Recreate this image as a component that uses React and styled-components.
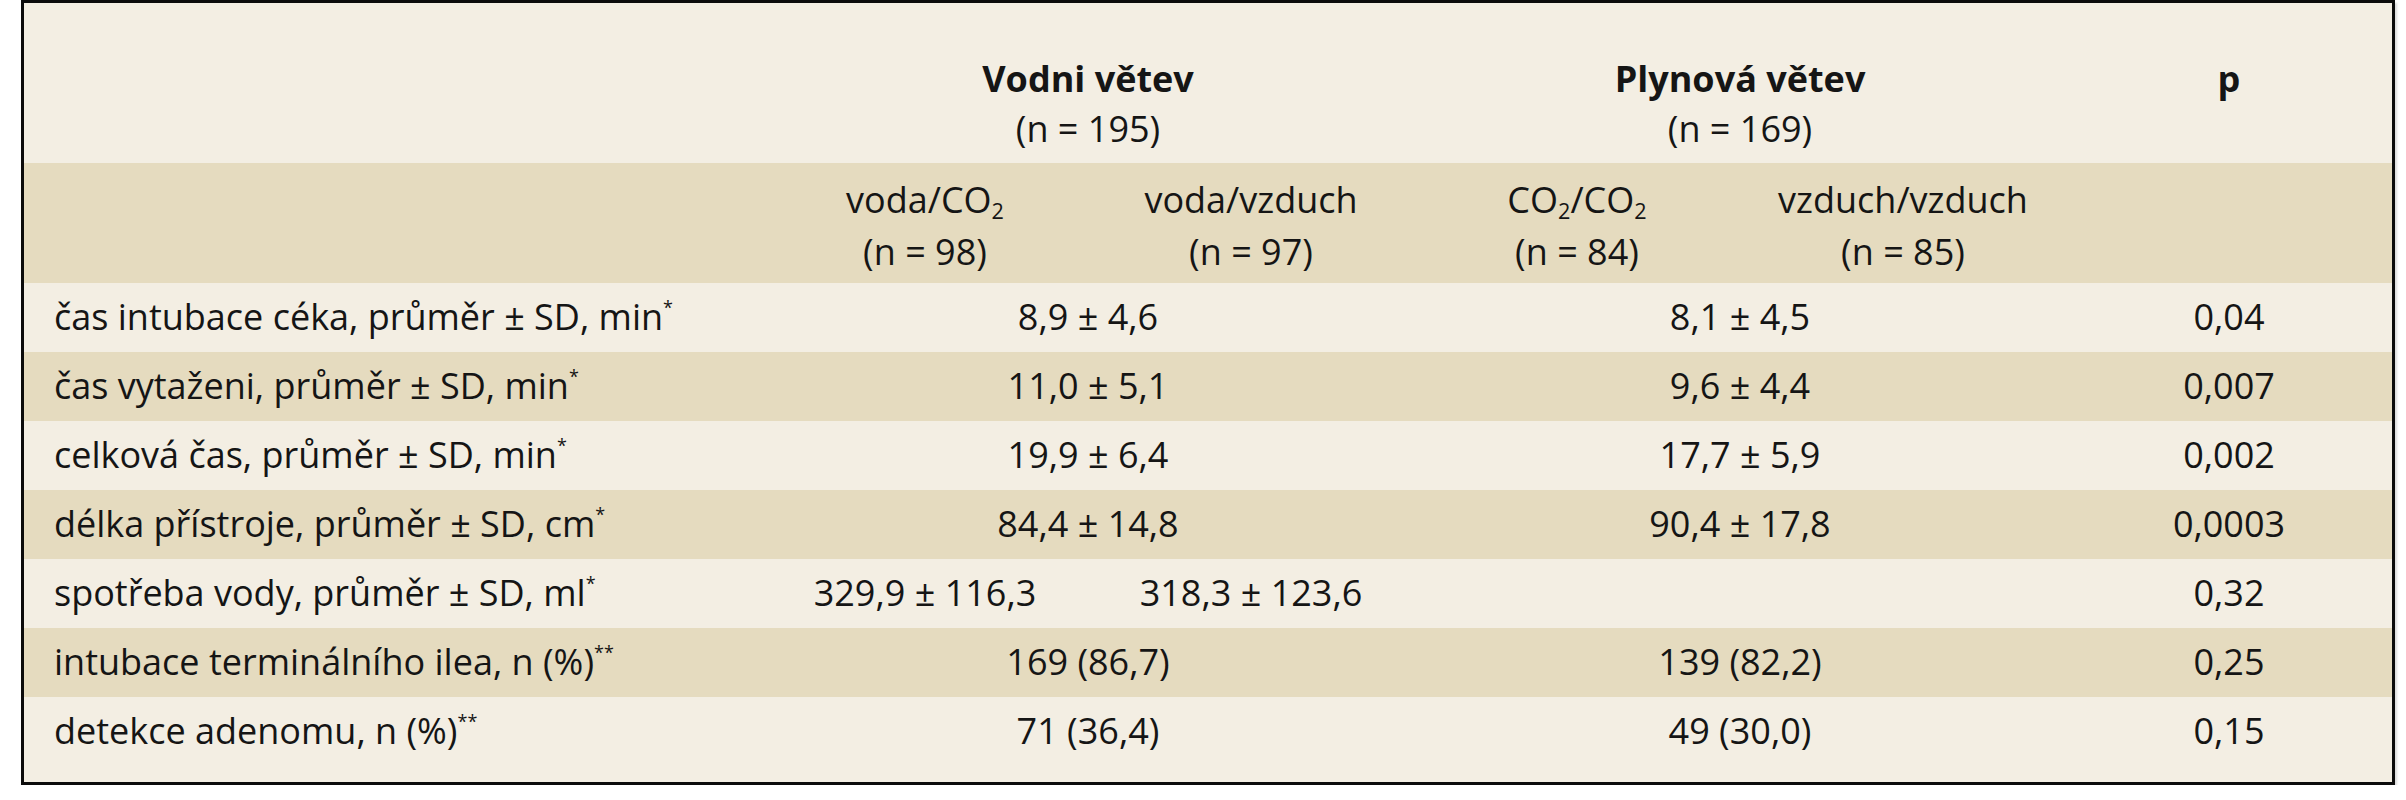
import styled, { createGlobalStyle } from "styled-components";

const GlobalStyle = createGlobalStyle`
  body {
    margin: 0;
    background: #fff;
  }
`;

const Page = styled.div`
  padding-left: 21px;
`;

const Frame = styled.div`
  width: 2368px;
  border: 3px solid #0b0b0b;
  box-shadow: 2px 3px 2px rgba(0, 0, 0, 0.14);
`;

const Table = styled.table`
  width: 100%;
  border-collapse: collapse;
  table-layout: fixed;
  font-family: "Open Sans", "Liberation Sans", sans-serif;
  font-size: 36px;
  line-height: 50px;
  color: #151515;
`;

const Row = styled.tr`
  background: ${(p) => (p.$shade === "dark" ? "#e5dbbf" : "#f3eee3")};
`;

const HeadCell = styled.th`
  font-weight: 400;
  text-align: center;
  white-space: nowrap;
  vertical-align: top;
  padding: ${(p) => (p.$top ? "51px 0 9px" : "11px 0 5px")};
  line-height: ${(p) => (p.$top ? "50px" : "52px")};
`;

const Title = styled.span`
  display: block;
  font-weight: 700;
`;

const Line = styled.span`
  display: block;
`;

const Cell = styled.td`
  text-align: center;
  white-space: nowrap;
  padding: 9px 0 ${(p) => (p.$last ? "26px" : "10px")};
`;

const LabelCell = styled(Cell)`
  text-align: left;
  padding-left: 30px;
`;

const Sub = styled.sub`
  font-size: 0.6em;
  line-height: 0;
  vertical-align: -0.3em;
`;

const Sup = styled.sup`
  font-size: 0.5em;
  line-height: 0;
  vertical-align: 0.9em;
`;

const CO2 = () => (
  <>
    CO<Sub>2</Sub>
  </>
);

const rows = [
  { label: "čas intubace céka, průměr ± SD, min", mark: "*", water: "8,9 ± 4,6", gas: "8,1 ± 4,5", p: "0,04" },
  { label: "čas vytaženi, průměr ± SD, min", mark: "*", water: "11,0 ± 5,1", gas: "9,6 ± 4,4", p: "0,007" },
  { label: "celková čas, průměr ± SD, min", mark: "*", water: "19,9 ± 6,4", gas: "17,7 ± 5,9", p: "0,002" },
  { label: "délka přístroje, průměr ± SD, cm", mark: "*", water: "84,4 ± 14,8", gas: "90,4 ± 17,8", p: "0,0003" },
  { label: "spotřeba vody, průměr ± SD, ml", mark: "*", split: ["329,9 ± 116,3", "318,3 ± 123,6"], gas: "", p: "0,32" },
  { label: "intubace terminálního ilea, n (%)", mark: "**", water: "169 (86,7)", gas: "139 (82,2)", p: "0,25" },
  { label: "detekce adenomu, n (%)", mark: "**", water: "71 (36,4)", gas: "49 (30,0)", p: "0,15" },
];

export default function App() {
  return (
    <Page>
      <GlobalStyle />
      <Frame>
        <Table>
          <colgroup>
            <col style={{ width: "738px" }} />
            <col style={{ width: "326px" }} />
            <col style={{ width: "326px" }} />
            <col style={{ width: "326px" }} />
            <col style={{ width: "326px" }} />
            <col style={{ width: "326px" }} />
          </colgroup>
          <thead>
            <Row $shade="light">
              <HeadCell $top />
              <HeadCell $top colSpan={2}>
                <Title>Vodni větev</Title>
                <Line>(n = 195)</Line>
              </HeadCell>
              <HeadCell $top colSpan={2}>
                <Title>Plynová větev</Title>
                <Line>(n = 169)</Line>
              </HeadCell>
              <HeadCell $top>
                <Title>p</Title>
              </HeadCell>
            </Row>
            <Row $shade="dark">
              <HeadCell />
              <HeadCell>
                <Line>voda/<CO2 /></Line>
                <Line>(n = 98)</Line>
              </HeadCell>
              <HeadCell>
                <Line>voda/vzduch</Line>
                <Line>(n = 97)</Line>
              </HeadCell>
              <HeadCell>
                <Line><CO2 />/<CO2 /></Line>
                <Line>(n = 84)</Line>
              </HeadCell>
              <HeadCell>
                <Line>vzduch/vzduch</Line>
                <Line>(n = 85)</Line>
              </HeadCell>
              <HeadCell />
            </Row>
          </thead>
          <tbody>
            {rows.map((r, i) => {
              const last = i === rows.length - 1;
              return (
                <Row key={r.label} $shade={i % 2 === 0 ? "light" : "dark"}>
                  <LabelCell $last={last}>
                    {r.label}
                    <Sup>{r.mark}</Sup>
                  </LabelCell>
                  {r.split ? (
                    <>
                      <Cell $last={last}>{r.split[0]}</Cell>
                      <Cell $last={last}>{r.split[1]}</Cell>
                    </>
                  ) : (
                    <Cell $last={last} colSpan={2}>{r.water}</Cell>
                  )}
                  <Cell $last={last} colSpan={2}>{r.gas}</Cell>
                  <Cell $last={last}>{r.p}</Cell>
                </Row>
              );
            })}
          </tbody>
        </Table>
      </Frame>
    </Page>
  );
}
